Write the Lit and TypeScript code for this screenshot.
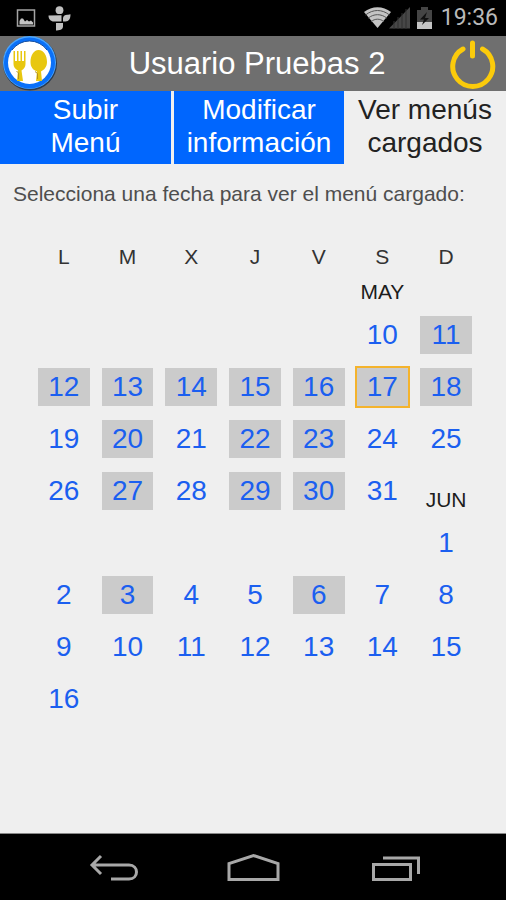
import { LitElement, html, css, svg, nothing } from "lit";
import { customElement, state } from "lit/decorators.js";
import { classMap } from "lit/directives/class-map.js";

type Cell = { day: number; month: string; menu?: boolean } | { label: string } | null;

const WEEKDAYS = ["L", "M", "X", "J", "V", "S", "D"];
const MENUS: Record<string, number[]> = {
  may: [11, 12, 13, 14, 15, 16, 17, 18, 20, 22, 23, 27, 29, 30],
  jun: [3, 6],
};

function days(month: string, from: number, to: number): Cell[] {
  const out: Cell[] = [];
  for (let day = from; day <= to; day++) out.push({ day, month, menu: MENUS[month].includes(day) });
  return out;
}

function blanks(count: number): Cell[] {
  return Array.from({ length: count }, () => null);
}

const WEEKS: Cell[][] = [
  [...blanks(5), ...days("may", 10, 11)],
  days("may", 12, 18),
  days("may", 19, 25),
  [...days("may", 26, 31), { label: "JUN" }],
  [...blanks(6), ...days("jun", 1, 1)],
  days("jun", 2, 8),
  days("jun", 9, 15),
  [...days("jun", 16, 16), ...blanks(6)],
];

@customElement("status-bar")
export class StatusBar extends LitElement {
  static styles = css`
    :host { display: flex; align-items: center; height: 36px; padding: 0 8px 0 16px; background: #000; color: #b9b9b9; }
    .left { display: flex; align-items: center; gap: 12px; flex: 1; }
    .right { display: flex; align-items: center; gap: 8px; }
    .clock { font: 23px/36px Roboto, "Liberation Sans", sans-serif; }
    svg { display: block; }
  `;
  render() {
    return html`
      <div class="left">
        <svg width="20" height="18" viewBox="0 0 20 18" aria-hidden="true">
          <rect x="1.500" y="1" width="17" height="16" fill="none" stroke="#a4a4a4" stroke-width="1.500" />
          <path d="M3.500 15.500V12L5 9.500L7 9.500L9 12.500L11 11L13 12.500L15 11.500L17 13.500V15.500Z" fill="#c4c4c4" />
        </svg>
        <svg width="23" height="25" viewBox="0 0 23 25" aria-hidden="true" fill="#c0c0c0">
          <circle cx="11.500" cy="4.200" r="3.900" />
          <path d="M0.500 9.500L13.500 9.200V15.500H6C2.500 15.500 0.500 13 0.500 9.500Z" />
          <path d="M15 12C15.500 9.500 17.500 8.500 20 8.800L22.500 8.200C22.500 12.500 21 15.300 17.500 15.500H15Z" />
          <path d="M8 17H15V20C15 23 13 24.600 8 24.400Z" />
        </svg>
      </div>
      <div class="right">
        <svg width="69" height="24" viewBox="0 0 69 24" aria-hidden="true">
          <path d="M0 6C8 -.500 19 -.500 27 6L13.500 22Z" fill="#c4c4c4" />
          <path d="M1.500 9C9 3 18 3 25.500 9M4 12.200C10 7.500 17 7.500 23 12.200M7 15.600C11 12.400 16 12.400 20 15.600" fill="none" stroke="#555" stroke-width="1" />
          <path d="M46 1V22.500H25Z" fill="#474747" />
          <path d="M30 15V23M34 11V23M38 7V23M42 3V23" stroke="#303030" stroke-width="1" />
          <path d="M53 4H57V1H64V4H68V23H53Z" fill="#454545" />
          <path d="M53 16H68V23H53Z" fill="#c4c4c4" />
          <path d="M63 6L56 13.500H60L58 19L65 12H61Z" fill="#111" />
        </svg>
        <span class="clock">19:36</span>
      </div>
    `;
  }
}

@customElement("menu-calendar")
export class MenuCalendar extends LitElement {
  @state() private selected = "may-17";

  static styles = css`
    :host { display: block; padding: 35px 28px 0 32px; }
    .calendar { width: 100%; table-layout: fixed; border-collapse: collapse; }
    .calendar th, .calendar td { padding: 0 6px; text-align: center; }
    .weekday { height: 28px; font-weight: 400; font-size: 21px; line-height: 28px; color: #333; }
    .month-row { height: 38px; }
    .week { height: 52px; }
    .month { vertical-align: bottom; font-size: 21px; line-height: 24px; color: #1c1c1c; }
    .month-label { display: block; padding-bottom: 5px; }
    .day {
      display: block; width: 100%; height: 38px; padding: 0; border: 0; border-radius: 0;
      background: none; color: #1b5ff0; font: inherit; font-size: 28px; line-height: 38px; cursor: pointer;
    }
    .day.menu { background: #cbcbcb; }
    .day.selected { outline: 2px solid #f4b32c; }
  `;

  private cell(cell: Cell) {
    if (!cell) return html`<td></td>`;
    if ("label" in cell) return html`<td class="month"><span class="month-label">${cell.label}</span></td>`;
    const key = `${cell.month}-${cell.day}`;
    const selected = key === this.selected;
    return html`<td>
      <button type="button" aria-pressed=${selected ? "true" : "false"}
        class=${classMap({ day: true, menu: !!cell.menu, selected })}
        @click=${() => (this.selected = key)}>${cell.day}</button>
    </td>`;
  }

  render() {
    return html`
      <table class="calendar">
        <thead>
          <tr>${WEEKDAYS.map((d) => html`<th class="weekday" scope="col">${d}</th>`)}</tr>
        </thead>
        <tbody>
          <tr class="month-row">${[...blanks(5), { label: "MAY" }, null].map((c) => this.cell(c))}</tr>
          ${WEEKS.map((week) => html`<tr class="week">${week.map((c) => this.cell(c))}</tr>`)}
        </tbody>
      </table>
    `;
  }
}

const NAV = [
  { name: "Atrás", art: svg`<path d="M20 6L11 15L20 24M11 15H48C58 15 58 29 48 29H30" />` },
  { name: "Inicio", art: svg`<path d="M6 29.500V13.500L30.500 5.500L55 13.500V29.500Z" />` },
  { name: "Recientes", art: svg`<path d="M8.500 14.500H45.500V29.500H8.500ZM18 8H53.500V24" />` },
];

@customElement("app-root")
export class AppRoot extends LitElement {
  @state() private tab = 2;

  static styles = css`
    :host {
      display: flex; flex-direction: column; min-height: 100vh; background: #efefef;
      font-family: "Liberation Sans", Arial, sans-serif;
    }
    .header { display: flex; align-items: center; height: 55px; background: #6f6f6f; }
    .logo { display: block; }
    .title { flex: 1; margin: 0; padding-left: 4px; text-align: center; font-size: 31px; font-weight: 400; line-height: 55px; color: #fff; }
    .power { display: block; padding: 0; border: 0; margin-right: 10px; background: none; cursor: pointer; }
    .power svg, .nav svg { display: block; }
    .tabs { display: grid; grid-template-columns: 174fr 170fr 162fr; height: 73px; }
    .tab {
      border: 0; padding: 0 0 4px; border-radius: 0; background: #0066fe; color: #fff;
      font: inherit; font-size: 28px; line-height: 33px; cursor: pointer;
    }
    .tab:first-child { border-right: 3px solid #efefef; }
    .tab.current { background: #efefef; color: #222; }
    .tab span { display: block; }
    .content { flex: 1; }
    .hint { margin: 0; padding: 16px 13px 0; font-size: 21px; line-height: 28px; color: #4e4e4e; }
    .nav {
      display: flex; justify-content: center; height: 66px;
      border-top: 1px solid #888; background: #000;
    }
    .soft-key { flex: 0 0 28%; display: flex; align-items: center; justify-content: center; padding: 0; border: 0; background: none; cursor: pointer; }
    .soft-key svg { fill: none; stroke: #a8a8a8; stroke-width: 3; }
  `;

  render() {
    const tabs = [["Subir", "Menú"], ["Modificar", "información"], ["Ver menús", "cargados"]];
    return html`
      <status-bar></status-bar>
      <header class="header">
        <svg class="logo" width="60" height="55" viewBox="0 0 60 55" aria-hidden="true">
          <circle cx="30" cy="27.500" r="27" fill="#2c3b50" />
          <circle cx="29.500" cy="26.500" r="26.500" fill="#4aa6ff" />
          <circle cx="29.500" cy="27" r="25.500" fill="#0a70f8" />
          <circle cx="29.500" cy="26.500" r="21.500" fill="#fff" />
          <path d="M12 14A21.500 21.500 0 0 1 47 14" fill="none" stroke="#164d9c" stroke-width="1" />
          <g fill="#e8c70f">
            <path d="M13.500 15H15V25H17V15H18.500V25H20.500V15H22V25H24V15H25.500V28C25.500 31 24 33 21.500 34.500L23 45H17L18 34.500C15 33 13.500 31 13.500 28Z" />
            <path d="M38.500 14C44 14 47 20 47 26C47 31 44 34 41 35.500L42 45H36L37 35.500C33 34 30.500 31 30.500 26C30.500 20 33.500 14 38.500 14Z" />
          </g>
          <path d="M16.500 35L18.500 37V43M35 35.500L37.500 37.500V43" fill="none" stroke="#b3921c" stroke-width="1" />
        </svg>
        <h1 class="title">Usuario Pruebas 2</h1>
        <button class="power" type="button" aria-label="Salir">
          <svg width="46" height="50" viewBox="0 0 46 50" fill="none" stroke="#fbcb0b" stroke-width="5" stroke-linecap="round">
            <path d="M13 10A20 20 0 1 0 32.500 10M22.500 4V17" />
          </svg>
        </button>
      </header>
      <nav class="tabs">
        ${tabs.map((lines, i) => html`
          <button type="button" class=${classMap({ tab: true, current: i === this.tab })}
            aria-current=${i === this.tab ? "page" : nothing} @click=${() => (this.tab = i)}>
            ${lines.map((line) => html`<span>${line}</span>`)}
          </button>`)}
      </nav>
      <main class="content">
        <p class="hint">Selecciona una fecha para ver el menú cargado:</p>
        <menu-calendar></menu-calendar>
      </main>
      <footer class="nav">
        ${NAV.map((key) => html`
          <button class="soft-key" type="button" aria-label=${key.name}>
            <svg width="60" height="34" viewBox="0 0 60 34">${key.art}</svg>
          </button>`)}
      </footer>
    `;
  }
}
